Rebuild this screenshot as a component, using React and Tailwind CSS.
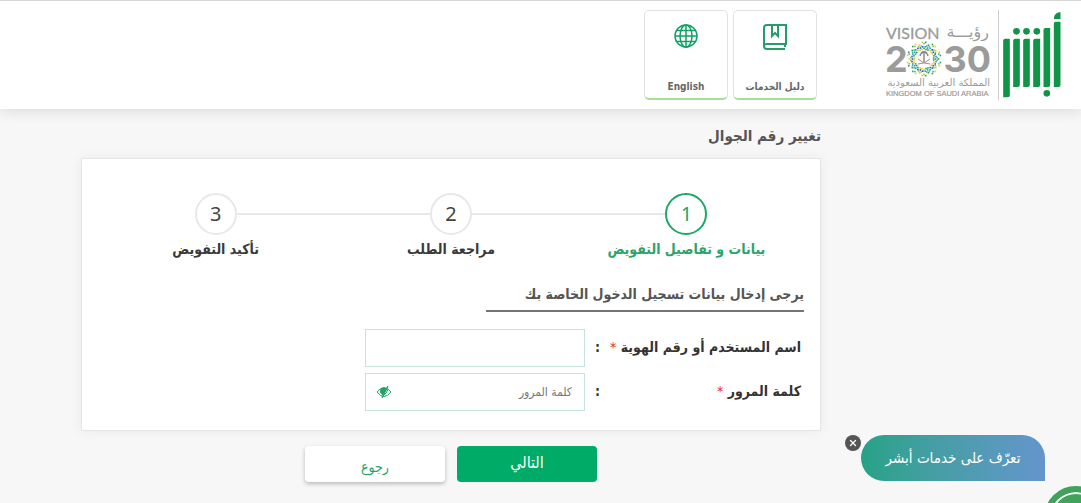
import { useState } from 'react';
import { X } from 'lucide-react';

const STEPS = ['بيانات و تفاصيل التفويض', 'مراجعة الطلب', 'تأكيد التفويض'];

const MOSAIC_COLORS = ['#2f9e5b', '#8cc63f', '#2a93c9', '#e6c63c', '#3fb8a0', '#1f5fa8'];

// Ring of tiles following a ten pointed star outline
const MOSAIC = [10, 12, 14, 16].flatMap((radius, ring) =>
  Array.from({ length: 30 }, (_, i) => {
    const angle = ((i + (ring % 2) / 2) / 30) * Math.PI * 2;
    const r = radius + (ring > 1 ? 1.5 : 0.5) * Math.cos(angle * 10);
    return {
      x: 39 + r * Math.sin(angle),
      y: 36 - r * Math.cos(angle),
      color: MOSAIC_COLORS[(i * 5 + ring * 2 + (i % 3)) % MOSAIC_COLORS.length],
    };
  })
);

function AbsherLogo() {
  return (
    <svg viewBox="12 36 173 258" className="h-[86px] w-[58px]" fill="#119447" role="img" aria-label="أبشر">
      <path d="M12 122q0-6 6-6h14v170q0 6-6 6H12z" />
      <path d="M42 122q0-6 6-6h14v139q0 6-6 6H42z" />
      <path d="M72 122q0-6 6-6h14v139q0 6-6 6H72z" />
      <path d="M102 122q0-6 6-6h15v139q0 6-6 6h-15z" />
      <path d="M133 90q0-6 6-6h14v171q0 6-6 6h-14z" />
      <path d="M164 71q0-6 6-6h14v190q0 6-6 6h-14z" />
      <path d="M164 57c0-12 8-20 20-20v20z" />
      <circle cx="52" cy="94" r="10" />
      <circle cx="82" cy="94" r="10" />
      <circle cx="113" cy="94" r="10" />
      <circle cx="143" cy="280" r="10" />
    </svg>
  );
}

function VisionLogo() {
  return (
    <svg viewBox="0 0 106 74" className="h-[74px] w-[106px]" direction="ltr" fill="#9b9b9b" role="img" aria-label="Vision 2030">
      <text x="1" y="16" fontFamily="Lato, sans-serif" fontSize="16" stroke="#9b9b9b" strokeWidth="0.3">VISION</text>
      <text x="104" y="14" textAnchor="end" fontFamily="DejaVu Sans, sans-serif" fontSize="16">رؤيـــة</text>
      <g fontFamily="Inter, sans-serif" fontSize="36" fontWeight="700">
        <text x="0" y="49">2</text>
        <text x="106" y="49" textAnchor="end">30</text>
      </g>
      {MOSAIC.map((t, i) => (
        <rect key={i} x={t.x - 0.8} y={t.y - 0.8} width="1.600" height="1.600" fill={t.color} />
      ))}
      <g fill="none" stroke="#8a8a8a">
        <path d="M39 31v8M35 33q1-4 4-3q3-1 4 3M36 30q3-3 6 0" strokeWidth="1.500" />
        <path d="M33 41q7 0 12-5M45 41q-7 0-12-5" stroke="#a88" strokeWidth="1" />
      </g>
      <text x="105" y="63" textAnchor="end" fontFamily="DejaVu Sans, sans-serif" fontSize="10">المملكة العربية السعودية</text>
      <text x="1" y="73" fontFamily="Liberation Sans, sans-serif" fontSize="7.500" stroke="#9b9b9b" strokeWidth="0.2">KINGDOM OF SAUDI ARABIA</text>
    </svg>
  );
}

function GuideIcon() {
  return (
    <svg viewBox="0 0 24 26" className="h-[26px] w-6" fill="none" stroke="#279b6c" strokeWidth="2">
      <path d="M23 19V1H4Q1 1 1 4v18q0 3 3 3h18" />
      <path d="M24 20H4q-3 0-3 2M22 20v3" />
      <path d="M9 1v11l3-3 3 3V1" />
    </svg>
  );
}

function GlobeIcon() {
  return (
    <svg viewBox="0 0 24 24" className="h-6 w-6" fill="none" stroke="#12a066" strokeWidth="1.500">
      <circle cx="12" cy="12" r="11" />
      <ellipse cx="12" cy="12" rx="6" ry="11" />
      <path d="M12 1v22M1 12h22M3 6.500h18M3 17.500h18" />
    </svg>
  );
}

function EyeIcon() {
  return (
    <svg viewBox="0 0 16 12" className="h-3 w-4" fill="none" stroke="#21a266">
      <path d="M1 6q7-9 14 0q-7 9-14 0z" />
      <path d="M5 3q3-2 5 0L7 9Q3 7 5 3z" fill="#21a266" />
      <path d="M12 0L6 12" strokeWidth="1.200" />
      <path d="M12 3q-1 4-4 6" />
    </svg>
  );
}

function HeaderTile({ icon, label }) {
  return (
    <button
      type="button"
      className="flex h-[90px] w-[84px] flex-col items-center justify-between rounded-[5px] border border-b-2 border-[#e2e2e2] border-b-[#a5df98] bg-white pt-[13px] pb-[3px] text-[10px] leading-4 font-bold text-[#666]"
    >
      {icon}
      <span>{label}</span>
    </button>
  );
}

export default function App() {
  const [showHelp, setShowHelp] = useState(true);
  const [showPassword, setShowPassword] = useState(false);

  return (
    <div dir="rtl" className="min-h-screen overflow-hidden bg-[#f7f7f7] font-['DejaVu_Sans_Condensed','DejaVu_Sans',sans-serif] text-[#333]">
      {/* Header */}
      <header className="flex h-[109px] items-start border-t border-[#d8d8d8] bg-white pr-5 shadow-[0_2px_14px_rgba(0,0,0,0.12)]">
        <div className="flex w-[244px] shrink-0 pt-[9px]">
          <div className="pt-0.5 pl-1">
            <AbsherLogo />
          </div>
          <div className="flex h-[90px] items-center border-r border-[#ccc] pt-2.5 pr-[7px]">
            <VisionLogo />
          </div>
        </div>
        <nav className="flex gap-[5px] pt-[9px]">
          <HeaderTile icon={<GuideIcon />} label="دليل الخدمات" />
          <HeaderTile icon={<GlobeIcon />} label="English" />
        </nav>
      </header>

      <main className="mr-[260px] ml-[81px] pt-4">
        <h1 className="text-[15px] leading-[22px] font-bold text-[#555]">تغيير رقم الجوال</h1>

        <form onSubmit={(e) => e.preventDefault()}>
          <div className="mt-[11px] border border-[#e5e5e5] bg-white px-4 pt-[34px] pb-[19px] shadow-[0_0_12px_rgba(0,0,0,0.06)]">
            {/* Steps */}
            <ol className="flex">
              {STEPS.map((step, i) => (
                <li key={step} className="relative flex flex-1 flex-col items-center">
                  {i < STEPS.length - 1 && <div className="absolute top-5 right-1/2 h-0.5 w-full bg-[#e8e8e8]" />}
                  <div
                    className={`relative z-10 flex h-[42px] w-[42px] items-center justify-center rounded-full border-2 bg-white font-['Noto_Sans'] text-xl ${
                      i === 0 ? 'border-[#1fa768] text-[#1fa768]' : 'border-[#e8e8e8] text-[#444]'
                    }`}
                  >
                    {i + 1}
                  </div>
                  <span className={`mt-[3px] text-sm leading-[22px] font-bold ${i === 0 ? 'text-[#2ba46b]' : 'text-[#3a3a3a]'}`}>{step}</span>
                </li>
              ))}
            </ol>

            {/* Login details */}
            <h2 className="mt-[23px] w-[318px] border-b-2 border-[#757575] pb-[5px] text-sm leading-[22px] font-bold text-[#555]">
              يرجى إدخال بيانات تسجيل الدخول الخاصة بك
            </h2>

            <div className="mt-[17px] flex flex-col gap-1.5 pr-[3px] text-sm font-bold">
              <div className="flex items-center">
                <label htmlFor="username" className="w-[201px] pb-0.5">
                  اسم المستخدم أو رقم الهوية <span className="font-normal text-[#e8261c]">*</span>
                </label>
                <span className="w-[15px] pb-0.5">:</span>
                <input id="username" type="text" className="h-[38px] w-[220px] border border-[#c3e3dc] bg-white px-3 text-xs font-normal outline-none" />
              </div>
              <div className="flex items-center">
                <label htmlFor="password" className="w-[201px] pb-0.5">
                  كلمة المرور <span className="font-normal text-[#e8261c]">*</span>
                </label>
                <span className="w-[15px] pb-0.5">:</span>
                <div className="relative">
                  <input
                    id="password"
                    type={showPassword ? 'text' : 'password'}
                    placeholder="كلمة المرور"
                    className="h-[38px] w-[220px] border border-[#c3e3dc] bg-white pr-3 pl-9 text-xs font-normal outline-none placeholder:text-[#777]"
                  />
                  <button
                    type="button"
                    aria-label="إظهار كلمة المرور"
                    onClick={() => setShowPassword(!showPassword)}
                    className="absolute top-[13px] left-[11px]"
                  >
                    <EyeIcon />
                  </button>
                </div>
              </div>
            </div>
          </div>

          <div className="mt-[15px] flex justify-center gap-3">
            <button type="submit" className="h-9 w-[140px] rounded bg-[#00ab67] pb-0.5 text-base text-white">
              التالي
            </button>
            <button type="button" className="h-9 w-[140px] rounded bg-white pt-1.5 text-sm text-[#23a367] shadow-[0_2px_4px_rgba(0,0,0,0.25)]">
              رجوع
            </button>
          </div>
        </form>
      </main>

      {/* Assistant */}
      {showHelp && (
        <div className="fixed right-9 bottom-[22px] flex items-start">
          <button
            type="button"
            className="h-[46px] w-[184px] rounded-[23px] rounded-br-none bg-linear-to-r from-[#26a287] to-[#6495cd] text-[15px] text-white"
          >
            تعرّف على خدمات أبشر
          </button>
          <button
            type="button"
            aria-label="إغلاق"
            onClick={() => setShowHelp(false)}
            className="flex h-4 w-4 items-center justify-center rounded-full bg-[#555] text-white"
          >
            <X className="h-2.5 w-2.5" strokeWidth={3} />
          </button>
        </div>
      )}
      <button
        type="button"
        aria-label="المساعد"
        className="fixed -right-[27px] -bottom-[47px] h-16 w-16 rounded-full border-[6px] border-[#3fa35b] bg-[#3fa35b] shadow-[inset_0_0_0_2px_#fff]"
      />
    </div>
  );
}
